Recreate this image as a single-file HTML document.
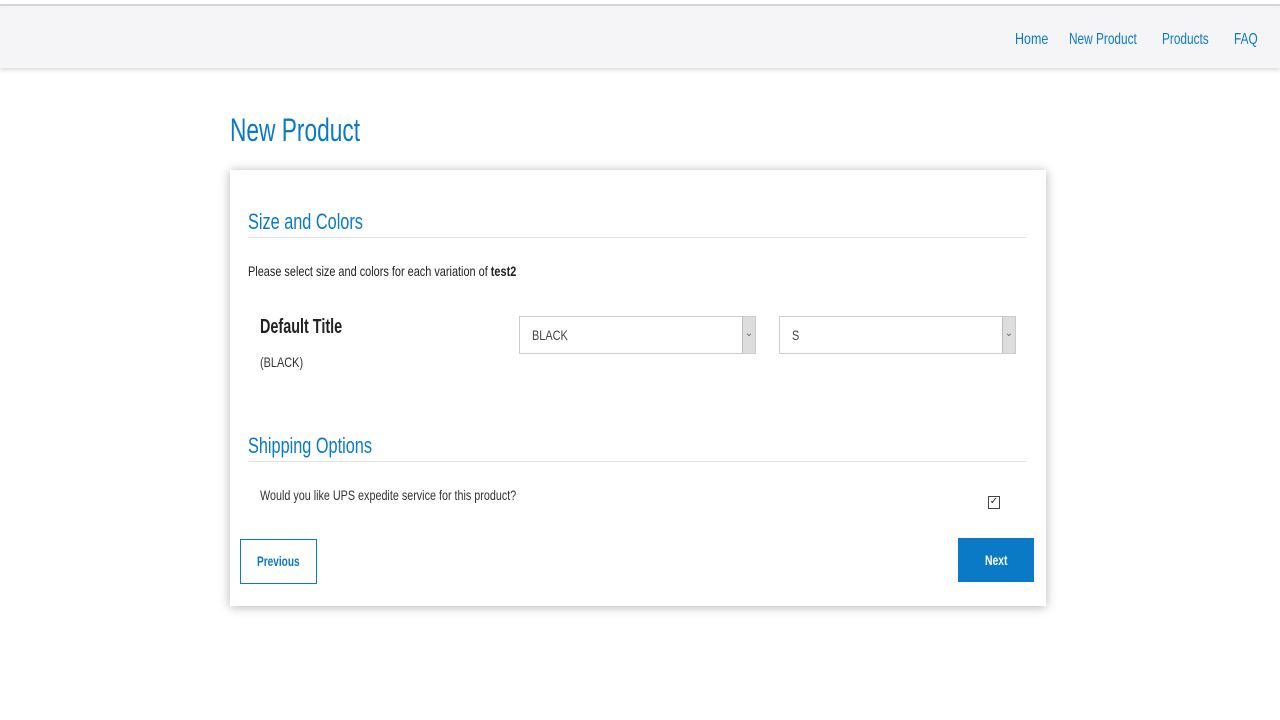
<!DOCTYPE html>
<html><head><style>
body{margin:0;width:1280px;height:720px;background:#fff;font-family:"Liberation Sans",sans-serif;position:relative;overflow:hidden}
.a{position:absolute;white-space:nowrap;transform:scaleX(.78);transform-origin:left center}
.blue{color:#0a7ac6}
.top{position:absolute;left:0;top:4px;width:1280px;height:2px;background:#d6d9dc}
.nav{position:absolute;left:0;top:6px;width:1280px;height:62px;background:#f5f5f7;box-shadow:0 2px 4px rgba(0,0,0,.15)}
.card{position:absolute;left:230px;top:170px;width:816px;height:436px;background:#fff;box-shadow:0 1px 10px rgba(0,0,0,.3)}
.hr{position:absolute;height:1px;background:#e3e3e3}
.sel{position:absolute;top:316px;height:38px;border:1px solid #ccc;background:#fff;box-sizing:border-box}
.sel .arr{position:absolute;right:0;top:0;width:12px;height:36px;background:#ddd;border-left:1px solid #bbb;color:#666;font-size:10px;text-align:center;line-height:34px}
</style></head><body>
<div class="top"></div>
<div class="nav"></div>
<div class="a blue" style="left:1015px;top:31px;font-size:16px">Home</div>
<div class="a blue" style="left:1069px;top:31px;font-size:16px;transform:scaleX(.74)">New Product</div>
<div class="a blue" style="left:1162px;top:31px;font-size:16px;transform:scaleX(.74)">Products</div>
<div class="a blue" style="left:1234px;top:31px;font-size:16px;transform:scaleX(.74)">FAQ</div>
<div class="a blue" style="left:230px;top:112px;font-size:32px;transform:scaleX(.71)">New Product</div>
<div class="card"></div>
<div class="a blue" style="left:248px;top:209px;font-size:22px;transform:scaleX(.74)">Size and Colors</div>
<div class="hr" style="left:248px;top:237px;width:779px"></div>
<div class="a" style="left:248px;top:263px;font-size:14px;color:#222">Please select size and colors for each variation of <b>test2</b></div>
<div class="a" style="left:260px;top:316px;font-size:20px;font-weight:bold;color:#222;transform:scaleX(.72)">Default Title</div>
<div class="a" style="left:260px;top:354px;font-size:14px;color:#333">(BLACK)</div>
<div class="sel" style="left:519px;width:237px"><span class="a" style="left:12px;top:10px;font-size:14px;color:#444">BLACK</span><div class="arr">⌄</div></div>
<div class="sel" style="left:779px;width:237px"><span class="a" style="left:12px;top:10px;font-size:14px;color:#444">S</span><div class="arr">⌄</div></div>
<div class="a blue" style="left:248px;top:433px;font-size:22px;transform:scaleX(.74)">Shipping Options</div>
<div class="hr" style="left:248px;top:461px;width:779px"></div>
<div class="a" style="left:260px;top:487px;font-size:14px;color:#333;transform:scaleX(.77)">Would you like UPS expedite service for this product?</div>
<div style="position:absolute;left:988px;top:496px;width:10px;height:11px;border:1px solid #444;font-size:10px;line-height:10px;text-align:center;color:#222">✓</div>
<div style="position:absolute;left:240px;top:539px;width:77px;height:45px;border:1px solid #0a7ac6;box-sizing:border-box"></div>
<div class="a blue" style="left:257px;top:553px;font-size:14px;font-weight:bold;transform:scaleX(.72)">Previous</div>
<div style="position:absolute;left:958px;top:538px;width:76px;height:44px;background:#0a7ac6"></div>
<div class="a" style="left:985px;top:552px;font-size:14px;font-weight:bold;color:#fff;transform:scaleX(.74)">Next</div>
</body></html>
